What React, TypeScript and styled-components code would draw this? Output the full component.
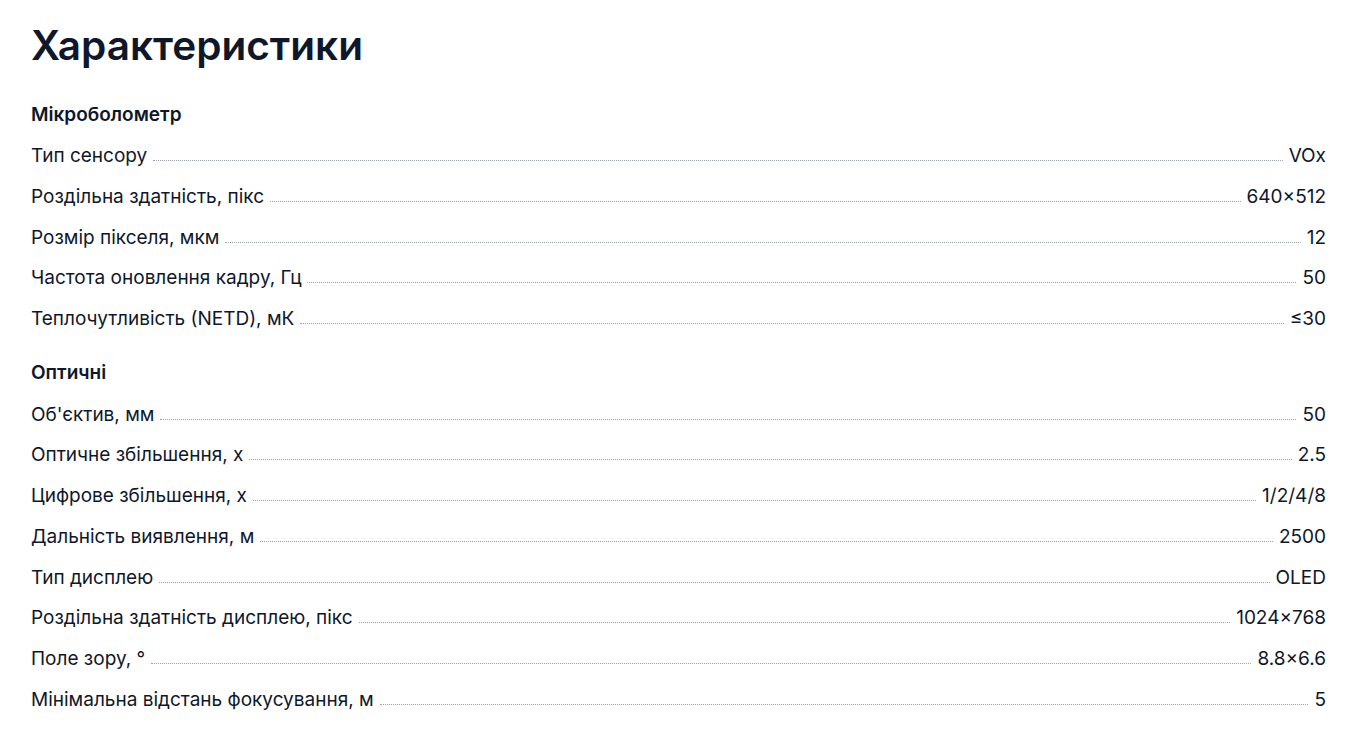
import styled, { createGlobalStyle } from 'styled-components'

const GlobalStyle = createGlobalStyle`
  body {
    margin: 0;
    background: #ffffff;
    font-family: Inter, "Noto Sans", sans-serif;
    color: #0f172a;
  }
`

type Spec = { label: string; value: string }
type Group = { title: string; specs: Spec[] }

const groups: Group[] = [
  {
    title: 'Мікроболометр',
    specs: [
      { label: 'Тип сенсору', value: 'VOx' },
      { label: 'Роздільна здатність, пікс', value: '640×512' },
      { label: 'Розмір пікселя, мкм', value: '12' },
      { label: 'Частота оновлення кадру, Гц', value: '50' },
      { label: 'Теплочутливість (NETD), мК', value: '≤30' },
    ],
  },
  {
    title: 'Оптичні',
    specs: [
      { label: "Об'єктив, мм", value: '50' },
      { label: 'Оптичне збільшення, х', value: '2.5' },
      { label: 'Цифрове збільшення, х', value: '1/2/4/8' },
      { label: 'Дальність виявлення, м', value: '2500' },
      { label: 'Тип дисплею', value: 'OLED' },
      { label: 'Роздільна здатність дисплею, пікс', value: '1024×768' },
      { label: 'Поле зору, °', value: '8.8×6.6' },
      { label: 'Мінімальна відстань фокусування, м', value: '5' },
    ],
  },
]

const App = () => {
  return (
    <>
      <GlobalStyle />
      <Container>
        <Title>Характеристики</Title>
        {groups.map((group) => (
          <Section key={group.title}>
            <SectionTitle>{group.title}</SectionTitle>
            {group.specs.map((spec) => (
              <Row key={spec.label}>
                <Label>{spec.label}</Label>
                <Leader />
                <Value>{spec.value}</Value>
              </Row>
            ))}
          </Section>
        ))}
      </Container>
    </>
  )
}

const Container = styled.div`
  width: 1295px;
  margin: 0 0 0 31px;
  padding-top: 22px;
`

const Title = styled.h2`
  font-size: 40.5px;
  line-height: 48px;
  font-weight: 600;
  margin: 0 0 25px;
`

const Section = styled.section`
  margin-bottom: 14px;
`

const SectionTitle = styled.h3`
  font-size: 19px;
  line-height: 28px;
  font-weight: 600;
  margin: 0;
  padding: 6px 0 7px;
`

const Row = styled.div`
  display: flex;
  align-items: baseline;
  font-size: 19px;
  line-height: 28px;
  padding: 6.35px 0;
`

const Label = styled.span`
  white-space: nowrap;
`

const Leader = styled.span`
  flex: 1;
  margin: 0 6px;
  border-bottom: 1px dotted #9ca3af;
  transform: translateY(-1px);
`

const Value = styled.span`
  white-space: nowrap;
`

export default App
